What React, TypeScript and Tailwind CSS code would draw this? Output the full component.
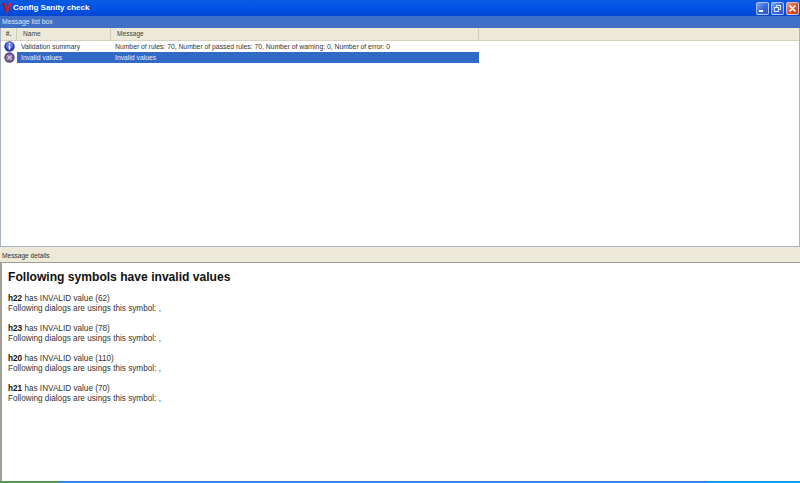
const symbols = [
  { name: "h22", value: 62 },
  { name: "h23", value: 78 },
  { name: "h20", value: 110 },
  { name: "h21", value: 70 },
];

function AppIcon() {
  return (
    <svg width="10" height="10" viewBox="0 0 10 10" className="shrink-0">
      <path d="M0 0 L3 0 L5 5 L7 0 L10 0 L5.5 10 L4.5 10 Z" fill="#d8202a" />
      <path d="M0 0 L1.6 0 L4.5 7 L4.5 10 Z" fill="#7a1a28" />
    </svg>
  );
}

function WindowButton({ kind }: { kind: "min" | "restore" | "close" }) {
  const bg =
    kind === "close"
      ? "bg-gradient-to-br from-[#e8a08a] via-[#d8532f] to-[#c23c1c]"
      : "bg-gradient-to-br from-[#7fa3ee] via-[#3a6be0] to-[#2a55c8]";
  return (
    <div className={`w-[13px] h-[13px] rounded-[2px] border border-[#dce6fa]/70 flex items-center justify-center ${bg}`}>
      <svg width="9" height="9" viewBox="0 0 9 9">
        {kind === "min" && <rect x="1" y="6" width="4" height="2" fill="#fff" />}
        {kind === "restore" && (
          <g fill="none" stroke="#dce6fa" strokeWidth="1">
            <rect x="3.5" y="1.5" width="4" height="4" />
            <rect x="1.5" y="3.5" width="4" height="4" fill="#3a6be0" />
          </g>
        )}
        {kind === "close" && <path d="M1.5 1.5 L7.5 7.5 M7.5 1.5 L1.5 7.5" stroke="#fff" strokeWidth="1.6" />}
      </svg>
    </div>
  );
}

function InfoIcon() {
  return (
    <svg width="11" height="11" viewBox="0 0 11 11">
      <circle cx="5.5" cy="5.5" r="5.2" fill="#2a3fb0" />
      <circle cx="5.5" cy="4" r="3.6" fill="#5f74d8" />
      <rect x="4.7" y="4.5" width="1.6" height="4" fill="#fff" />
      <rect x="4.7" y="2" width="1.6" height="1.5" fill="#fff" />
    </svg>
  );
}

function ErrorIcon() {
  return (
    <svg width="11" height="11" viewBox="0 0 11 11">
      <circle cx="5.5" cy="5.5" r="5.2" fill="#5a4a8c" />
      <circle cx="5.5" cy="5.5" r="3.6" fill="#8a6a9c" />
      <path d="M3.5 3.5 L7.5 7.5 M7.5 3.5 L3.5 7.5" stroke="#d8c8dc" strokeWidth="1.2" />
    </svg>
  );
}

export default function App() {
  return (
    <div className="w-[800px] h-[483px] overflow-hidden flex flex-col bg-[#ece9d8] font-['Liberation_Sans',Arial,sans-serif] text-[6.8px] leading-[10px] text-[#333]">
      {/* title bar */}
      <div className="h-[16px] shrink-0 flex items-center justify-between pl-[2px] pr-[1px] bg-gradient-to-b from-[#0a5be0] via-[#0352e8] to-[#0347d0]">
        <div className="flex items-center gap-[1px]">
          <AppIcon />
          <span className="text-white font-bold text-[8px]">Config Sanity check</span>
        </div>
        <div className="flex gap-[2px]">
          <WindowButton kind="min" />
          <WindowButton kind="restore" />
          <WindowButton kind="close" />
        </div>
      </div>

      {/* list pane */}
      <div className="h-[12px] shrink-0 flex items-center pl-[2px] bg-[#3f6fc6] text-[#dfe7f7] text-[6.8px]">
        Message list box
      </div>
      <div className="h-[219px] shrink-0 flex flex-col bg-white border border-[#a8b4c4] border-t-0">
        <div className="h-[13px] shrink-0 flex items-center bg-[#ece9d8] border-b border-[#d5d2c0] text-[#444] text-[6.6px]">
          <div className="w-[16px] h-full flex items-center justify-center border-r border-[#cfccba] font-bold">#.</div>
          <div className="w-[94px] h-full flex items-center pl-[6px] border-r border-[#cfccba]">Name</div>
          <div className="w-[368px] h-full flex items-center pl-[6px] border-r border-[#cfccba]">Message</div>
        </div>
        <div className="flex h-[11px] items-center w-[478px]">
          <div className="w-[16px] flex justify-center"><InfoIcon /></div>
          <div className="w-[94px] pl-[4px]">Validation summary</div>
          <div className="pl-[4px] whitespace-nowrap">
            Number of rules: 70, Number of passed rules: 70, Number of warning: 0, Number of error: 0
          </div>
        </div>
        <div className="flex h-[11px] items-center w-[478px]">
          <div className="w-[16px] flex justify-center"><ErrorIcon /></div>
          <div className="flex flex-1 h-full items-center bg-[#316ac5] text-[#e4ebf8]">
            <div className="w-[94px] pl-[4px]">Invalid values</div>
            <div className="pl-[4px]">Invalid values</div>
          </div>
        </div>
      </div>

      {/* splitter */}
      <div className="h-[3px] shrink-0" />

      {/* details pane */}
      <div className="h-[12px] shrink-0 flex items-center pl-[2px] text-[6.6px] text-[#333] bg-[#ece9d8]">
        Message details
      </div>
      <div className="flex-1 min-h-0 bg-white border-l-2 border-t border-[#a09e90] border-r-0 pl-[6px] pt-[7px]">
        <div className="font-bold text-[12.1px] leading-[14px] text-[#111]">Following symbols have invalid values</div>
        <div className="mt-[10px] flex flex-col gap-[10px] text-[8.2px] leading-[10px] text-[#333]">
          {symbols.map((s) => (
            <div key={s.name}>
              <div>
                <b className="text-[#111]">{s.name}</b> has INVALID value ({s.value})
              </div>
              <div>Following dialogs are usings this symbol: ,</div>
            </div>
          ))}
        </div>
      </div>

      {/* taskbar strip */}
      <div className="h-[2px] shrink-0 flex">
        <div className="w-[58px] bg-[#4f9a4f]" />
        <div className="w-[650px] bg-[#3a84e0]" />
        <div className="flex-1 bg-[#14a0e0]" />
      </div>
    </div>
  );
}
